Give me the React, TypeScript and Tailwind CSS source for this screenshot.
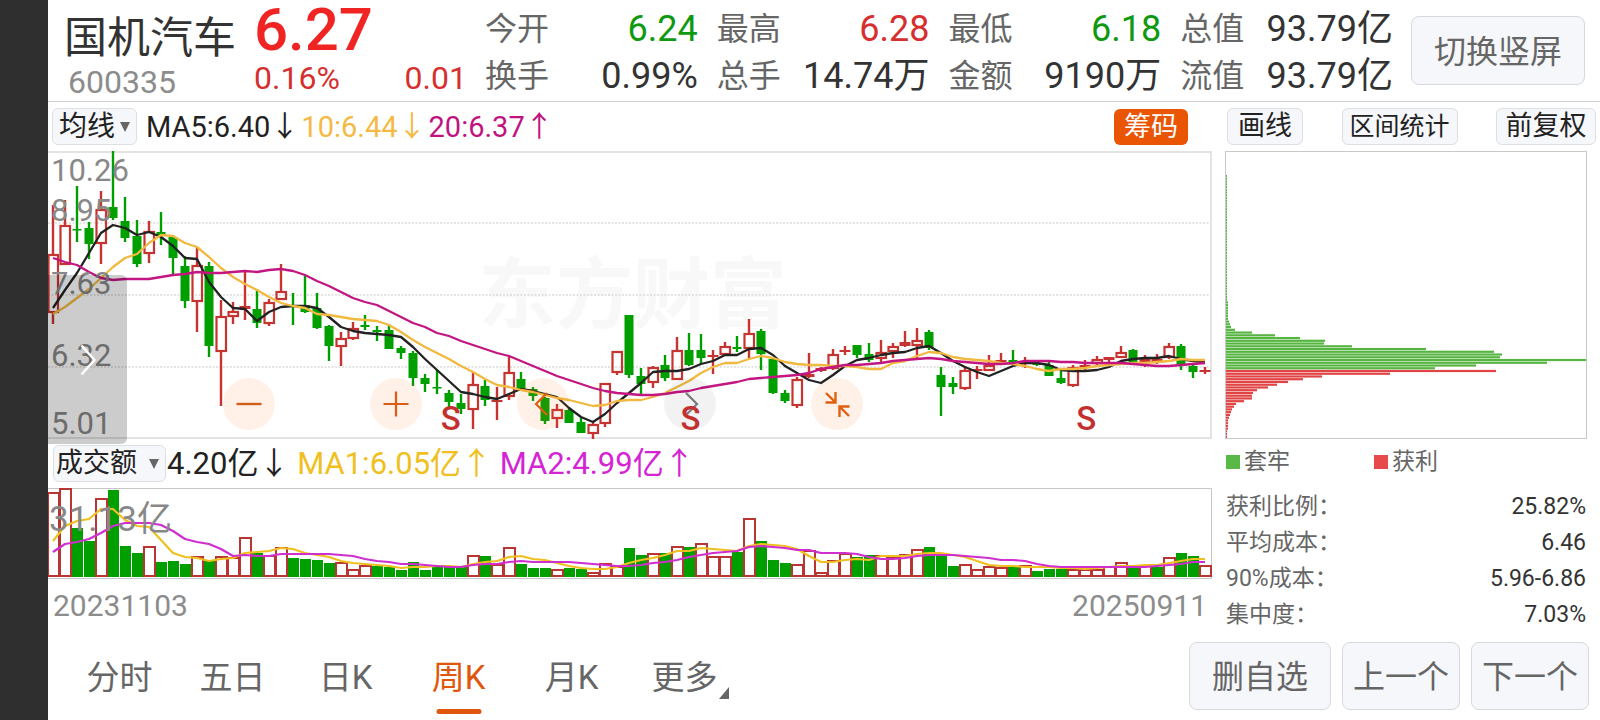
import { useState } from 'react'

type Candle = [up: 0 | 1, high: number, top: number, bottom: number, low: number, volumeTop: number]

const STEP = 12
const UP = '#c63431'
const DOWN = '#009f00'

// y values in chart units, measured from the top of each plot
const candles: Candle[] = [
  [1, 54, 103, 162, 173, 4],
  [1, 49, 74, 114, 114, 0],
  [0, 35, 78, 79, 91, 40],
  [0, 71, 77, 93, 108, 53],
  [1, 40, 58, 93, 113, 10],
  [0, 0, 56, 67, 69, 2],
  [0, 46, 70, 87, 91, 58],
  [0, 69, 85, 113, 116, 65],
  [1, 70, 80, 103, 112, 58],
  [0, 61, 81, 84, 94, 74],
  [0, 84, 86, 107, 123, 73],
  [0, 105, 115, 150, 157, 76],
  [1, 96, 114, 151, 181, 68],
  [0, 111, 115, 195, 206, 73],
  [1, 149, 165, 201, 255, 68],
  [1, 151, 160, 166, 173, 69],
  [1, 121, 155, 158, 169, 49],
  [0, 138, 158, 172, 177, 65],
  [1, 148, 151, 173, 175, 67],
  [1, 113, 140, 149, 149, 59],
  [0, 142, 154, 156, 174, 70],
  [0, 124, 154, 161, 162, 71],
  [0, 142, 157, 177, 178, 72],
  [0, 174, 175, 195, 210, 75],
  [1, 181, 187, 196, 215, 74],
  [1, 171, 177, 188, 189, 81],
  [0, 164, 174, 176, 179, 77],
  [0, 175, 179, 181, 190, 78],
  [0, 173, 179, 198, 198, 79],
  [0, 195, 197, 202, 208, 82],
  [0, 200, 202, 227, 235, 74],
  [0, 223, 227, 233, 241, 82],
  [0, 219, 236, 237, 243, 78],
  [0, 239, 242, 251, 256, 79],
  [0, 243, 252, 258, 263, 78],
  [1, 221, 233, 259, 278, 67],
  [0, 229, 235, 249, 255, 68],
  [1, 236, 249, 251, 269, 76],
  [1, 204, 221, 246, 249, 59],
  [0, 221, 228, 238, 238, 76],
  [0, 236, 238, 245, 250, 80],
  [0, 246, 247, 270, 273, 80],
  [1, 253, 258, 268, 277, 81],
  [0, 257, 259, 272, 272, 80],
  [0, 267, 271, 282, 282, 81],
  [1, 272, 273, 283, 288, 84],
  [1, 232, 232, 273, 276, 75],
  [1, 200, 200, 222, 224, 78],
  [0, 164, 164, 224, 227, 60],
  [0, 217, 225, 233, 243, 67],
  [1, 215, 216, 232, 237, 65],
  [0, 204, 214, 227, 230, 65],
  [1, 186, 199, 229, 229, 58],
  [0, 182, 199, 214, 215, 59],
  [0, 183, 199, 207, 213, 55],
  [1, 199, 204, 206, 223, 68],
  [1, 191, 195, 204, 205, 68],
  [0, 185, 196, 198, 201, 64],
  [1, 168, 182, 198, 207, 30],
  [0, 178, 180, 203, 219, 53],
  [0, 207, 208, 242, 243, 72],
  [0, 239, 242, 250, 252, 75],
  [1, 226, 228, 255, 257, 76],
  [1, 202, 223, 226, 227, 62],
  [1, 216, 217, 220, 221, 84],
  [1, 198, 203, 218, 219, 72],
  [1, 195, 199, 200, 204, 65],
  [0, 194, 194, 204, 207, 69],
  [0, 192, 203, 209, 211, 67],
  [1, 189, 201, 208, 213, 67],
  [1, 192, 195, 201, 207, 69],
  [1, 180, 191, 195, 196, 66],
  [1, 177, 189, 195, 208, 61],
  [0, 179, 181, 197, 199, 59],
  [0, 216, 224, 236, 265, 68],
  [0, 226, 232, 236, 243, 78],
  [1, 216, 219, 238, 239, 76],
  [1, 215, 218, 220, 228, 81],
  [1, 204, 214, 220, 220, 78],
  [1, 202, 209, 211, 214, 79],
  [0, 199, 209, 211, 211, 79],
  [1, 206, 211, 213, 217, 77],
  [0, 210, 212, 214, 215, 83],
  [0, 211, 214, 225, 225, 81],
  [0, 220, 227, 232, 233, 81],
  [1, 214, 216, 235, 236, 81],
  [1, 209, 214, 217, 219, 81],
  [1, 205, 208, 213, 214, 81],
  [1, 206, 206, 209, 212, 78],
  [1, 195, 201, 207, 207, 74],
  [0, 198, 199, 212, 212, 79],
  [1, 204, 208, 212, 216, 77],
  [1, 203, 208, 212, 213, 79],
  [1, 192, 195, 207, 208, 69],
  [0, 193, 195, 214, 219, 65],
  [0, 212, 215, 221, 227, 68],
  [1, 216, 219, 220, 223, 77],
]

// volume bars whose colour differs from the candle above them
const volumeUp: Record<number, 0 | 1> = { 26: 1, 54: 1, 92: 0 }

const ma5 = [
  157, 139, 122, 102, 82, 74, 77, 84, 81, 86, 95, 107, 108, 131, 146, 157, 158, 170, 161, 156, 155, 155, 157, 166,
  176, 180, 182, 183, 184, 186, 196, 208, 219, 230, 241, 243, 246, 248, 243, 238, 240, 243, 246, 257, 266, 271, 263, 252,
  242, 232, 221, 220, 220, 218, 213, 210, 204, 204, 198, 197, 204, 215, 222, 229, 232, 224, 215, 209, 207, 204, 202,
  201, 197, 195, 202, 210, 216, 221, 225, 220, 215, 212, 212, 214, 219, 220, 220, 219, 216, 210, 208, 207, 207, 205, 208, 210, 211,
]
const ma10 = [
  163, 156, 147, 138, 127, 116, 107, 103, 92, 84, 85, 92, 96, 106, 117, 126, 133, 139, 146, 152, 155, 157, 163, 164,
  166, 168, 169, 170, 174, 181, 189, 196, 202, 208, 215, 221, 228, 234, 236, 239, 241, 244, 247, 249, 252, 255, 254, 250,
  249, 249, 246, 242, 236, 230, 222, 216, 212, 212, 208, 205, 207, 211, 213, 214, 214, 215, 215, 216, 218, 218, 212,
  210, 205, 201, 202, 206, 208, 209, 210, 212, 213, 215, 218, 220, 218, 218, 217, 215, 214, 213, 212, 212, 211, 210, 208, 209, 209,
]
const ma20 = [
  107, 111, 114, 121, 127, 129, 128, 128, 128, 126, 124, 123, 121, 122, 122, 121, 120, 121, 119, 118, 120, 124, 130, 135,
  141, 147, 151, 154, 160, 166, 172, 176, 182, 185, 190, 194, 198, 202, 205, 210, 215, 220, 225, 229, 233, 237, 240, 242,
  243, 244, 244, 243, 241, 240, 237, 235, 233, 231, 228, 227, 226, 225, 224, 222, 218, 216, 214, 214, 213, 212, 210,
  209, 208, 207, 208, 210, 211, 212, 213, 213, 212, 210, 210, 210, 211, 211, 212, 212, 212, 212, 213, 214, 215, 215, 214, 213, 212,
]
const volMa1 = [
  53, 38, 33, 31, 21, 21, 32, 38, 39, 52, 65, 69, 70, 73, 71, 70, 65, 64, 63, 60, 61, 65, 67, 69, 73, 75, 76, 77, 78, 80,
  79, 79, 78, 78, 79, 76, 74, 73, 69, 68, 71, 72, 75, 78, 80, 81, 81, 79, 75, 72, 70, 67, 63, 63, 60, 61, 62, 63, 58, 56,
  57, 58, 61, 68, 74, 74, 72, 71, 72, 68, 68, 68, 66, 65, 65, 67, 69, 73, 77, 78, 78, 79, 79, 79, 80, 80, 81, 80, 79, 78,
  78, 77, 77, 75, 73, 71, 71,
]
const volMa2 = [
  64, 56, 54, 51, 45, 38, 35, 35, 35, 37, 43, 51, 54, 56, 61, 68, 67, 68, 68, 66, 66, 66, 66, 66, 67, 68, 71, 73, 74, 76,
  76, 77, 78, 79, 79, 77, 76, 76, 74, 73, 74, 74, 74, 74, 75, 76, 77, 78, 78, 77, 75, 74, 72, 69, 67, 65, 64, 63, 59, 58,
  59, 60, 62, 62, 65, 65, 65, 66, 69, 71, 71, 70, 68, 67, 67, 67, 68, 69, 70, 72, 72, 73, 76, 78, 79, 79, 79, 79, 79, 79,
  79, 79, 78, 77, 76, 74, 74,
]

const trapped = [
  ...Array<number>(46).fill(1),
  ...Array<number>(7).fill(2),
  3, 4, 5, 9, 26, 49, 74, 99, 98, 126, 200, 268, 276, 274, 360, 321, 250, 209,
]
const profit = [270, 164, 96, 77, 62, 51, 42, 31, 27, 26, 26, 18, 10, 8, 6, 5, 4, 3, 2, 2, 2, 2, 1, 1, 1]

const quotes = [
  [
    { label: '今开', value: '6.24', tone: 'text-[#0f990f]' },
    { label: '换手', value: '0.99%', tone: 'text-[#333]' },
  ],
  [
    { label: '最高', value: '6.28', tone: 'text-[#d5302f]' },
    { label: '总手', value: '14.74万', tone: 'text-[#333]' },
  ],
  [
    { label: '最低', value: '6.18', tone: 'text-[#0f990f]' },
    { label: '金额', value: '9190万', tone: 'text-[#333]' },
  ],
  [
    { label: '总值', value: '93.79亿', tone: 'text-[#333]' },
    { label: '流值', value: '93.79亿', tone: 'text-[#333]' },
  ],
]

const chipStats = [
  { label: '获利比例：', value: '25.82%' },
  { label: '平均成本：', value: '6.46' },
  { label: '90%成本：', value: '5.96-6.86' },
  { label: '集中度：', value: '7.03%' },
]

const tabs = ['分时', '五日', '日K', '周K', '月K', '更多']

const axisLabels = [
  { text: '10.26', pos: 'top-1' },
  { text: '8.95', pos: 'top-11' },
  { text: '7.63', pos: 'top-[117px]' },
  { text: '6.32', pos: 'top-[189px]' },
  { text: '5.01', pos: 'top-[257px]' },
]

const sellMarks = ['left-[34.6%]', 'left-[55.2%]', 'left-[89.2%]']

function toPoints(values: number[]) {
  return values.map((y, i) => `${5 + i * STEP},${y}`).join(' ')
}

function Caret() {
  return (
    <svg viewBox="0 0 10 10" className="pointer-events-none absolute right-[7px] h-[10px] w-[10px]" aria-hidden="true">
      <path d="M0 0H10L5 10Z" fill="#666" />
    </svg>
  )
}

function PriceChart() {
  return (
    <svg viewBox="0 0 1164 288" preserveAspectRatio="none" className="absolute inset-0 h-full w-full" aria-hidden="true">
      {[72, 144, 216].map((y) => (
        <line key={y} x1="0" x2="1164" y1={y} y2={y} stroke="#dcdcdc" strokeWidth="1.5" strokeDasharray="2 1.5" />
      ))}
      <path d="M0 1H1163V287H0" fill="none" stroke="#e3e3e3" strokeWidth="2" />
      {candles.map(([up, high, top, bottom, low], i) => {
        const x = 5 + i * STEP
        if (!up) {
          return (
            <g key={i} fill={DOWN}>
              <rect x={x - 1.2} y={high} width="2.4" height={low - high} />
              <rect x={x - 4.5} y={top} width="9" height={Math.max(bottom - top, 1.5)} />
            </g>
          )
        }
        return (
          <g key={i} fill={UP}>
            <rect x={x - 1.2} y={high} width="2.4" height={Math.max(top - high, 0)} />
            <rect x={x - 1.2} y={bottom} width="2.4" height={Math.max(low - bottom, 0)} />
            {bottom - top > 4 ? (
              <rect x={x - 4.5} y={top + 1} width="9.5" height={bottom - top - 2} fill="none" stroke={UP} strokeWidth="2.2" />
            ) : (
              <rect x={x - 5.5} y={top} width="11" height={Math.max(bottom - top, 2)} />
            )}
          </g>
        )
      })}
      <g fill="none" strokeWidth="2.3" strokeLinejoin="round">
        <polyline points={toPoints(ma5)} stroke="#222" />
        <polyline points={toPoints(ma10)} stroke="#f2b941" />
        <polyline points={toPoints(ma20)} stroke="#c31682" />
      </g>
    </svg>
  )
}

function VolumeChart() {
  return (
    <svg viewBox="0 0 1164 91" preserveAspectRatio="none" className="absolute inset-0 h-full w-full" aria-hidden="true">
      <path d="M0 .5H1163.5V90.5H0" fill="none" stroke="#c6c6c6" />
      {candles.map((candle, i) => {
        const x = 5 + i * STEP
        const top = candle[5]
        const up = volumeUp[i] ?? candle[0]
        return up ? (
          <rect key={i} x={x - 5} y={top + 1} width="11" height={87 - top} fill="#fff" stroke="#b93533" strokeWidth="2" />
        ) : (
          <rect key={i} x={x - 5} y={top} width="11" height={89 - top} fill={DOWN} />
        )
      })}
      <g fill="none" strokeWidth="2.2" strokeLinejoin="round">
        <polyline points={toPoints(volMa1)} stroke="#f0c020" />
        <polyline points={toPoints(volMa2)} stroke="#cf2fcf" />
      </g>
    </svg>
  )
}

function ChipChart() {
  const pitch = 2.745
  const start = 23
  return (
    <svg viewBox="0 0 360 286" preserveAspectRatio="none" className="h-full w-full" aria-hidden="true">
      {trapped.map((w, i) => (
        <rect key={i} x="0" y={start + i * pitch} width={w} height="2.2" fill="#55b540" />
      ))}
      {profit.map((w, i) => (
        <rect key={i} x="0" y={start + (trapped.length + i) * pitch} width={w} height="2.2" fill="#e04444" />
      ))}
    </svg>
  )
}

function ChartControls() {
  const warm = 'flex h-13 w-13 items-center justify-center rounded-full bg-[#ff6a1f]/10'
  const icon = 'h-8 w-8'
  return (
    <div className="absolute top-[227px] left-[175px] flex gap-[95px]">
      <button type="button" aria-label="缩小" className={warm}>
        <svg viewBox="0 0 32 32" className={icon} fill="none" stroke="#cf5f1a" strokeWidth="2.4">
          <path d="M3.5 16H28.5" />
        </svg>
      </button>
      <button type="button" aria-label="放大" className={warm}>
        <svg viewBox="0 0 32 32" className={icon} fill="none" stroke="#dd5d14" strokeWidth="2.2">
          <path d="M3.5 16H28.5M16 3.5V28.5" />
        </svg>
      </button>
      <button type="button" aria-label="左移" className={warm}>
        <svg viewBox="0 0 32 32" className={icon} fill="none" stroke="#e0600f" strokeWidth="2.2">
          <path d="M20 5L9 16L20 27" />
        </svg>
      </button>
      <button type="button" aria-label="右移" className="flex h-13 w-13 items-center justify-center rounded-full bg-black/5">
        <svg viewBox="0 0 32 32" className={icon} fill="none" stroke="#7a7a7a" strokeWidth="2.2">
          <path d="M12 5L23 16L12 27" />
        </svg>
      </button>
      <button type="button" aria-label="收起" className={warm}>
        <svg viewBox="0 0 32 32" className={icon} fill="none" stroke="#e0600f" strokeWidth="2.4">
          <path d="M5 5L14 14M4.5 14.5H14.5V4M28 28L19 19M28.5 18.5H18.5V29" />
        </svg>
      </button>
    </div>
  )
}

export default function App() {
  const [active, setActive] = useState('周K')

  return (
    <div className="flex min-h-screen bg-white font-['Roboto','Noto_Sans_CJK_SC',sans-serif] text-[#222]">
      <div className="w-12 shrink-0 bg-[#2f2f2f]" />
      <div className="flex min-w-0 flex-1 flex-col">
        <header className="flex h-[102px] border-b border-[#d2d2d2]">
          <div className="w-[204px] shrink-0 pt-2 pl-4">
            <h1 className="text-[43px] leading-[60px] whitespace-nowrap text-[#333]">国机汽车</h1>
            <p className="pl-1 text-[32px] leading-[28px] text-[#8c8c8c]">600335</p>
          </div>
          <div className="mr-[18px] w-[215px] shrink-0 pl-[2px]">
            <p className="text-[60px] leading-[60px] font-medium text-[#f02523]">6.27</p>
            <p className="flex justify-between text-[32px] leading-[36px] text-[#d5302f]">
              <span>0.16%</span>
              <span>0.01</span>
            </p>
          </div>
          <div className="flex min-w-0 flex-1 gap-[19px] pt-[6px]">
            {quotes.map((group) => (
              <dl key={group[0].label} className="flex-1 whitespace-nowrap">
                {group.map((item) => (
                  <div key={item.label} className="flex items-center justify-between leading-[47px]">
                    <dt className="text-[32px] text-[#666]">{item.label}</dt>
                    <dd className={`text-[36px] ${item.tone}`}>{item.value}</dd>
                  </div>
                ))}
              </dl>
            ))}
          </div>
          <button
            type="button"
            className="mt-4 mr-[15px] ml-[18px] h-[69px] w-[174px] shrink-0 rounded-lg border border-[#d6d9de] bg-[#f6f7fa] pt-[2px] text-[32px] text-[#666]"
          >
            切换竖屏
          </button>
        </header>

        <main className="flex">
          <section className="min-w-0 flex-1">
            <div className="flex h-[49px] items-center pr-6 pl-1">
              <div className="relative flex items-center">
                <select
                  aria-label="均线"
                  className="h-[37px] w-[85px] appearance-none rounded-md border border-[#dcdfe4] bg-[#f6f7fa] pl-[6px] text-[28px] leading-[35px]"
                >
                  <option>均线</option>
                </select>
                <Caret />
              </div>
              <p className="ml-[9px] flex gap-[2px] pt-[2px] text-[29px] leading-[37px] whitespace-nowrap">
                <span>MA5:6.40↓</span>
                <span className="text-[#f5b944]">10:6.44↓</span>
                <span className="text-[#bf1480]">20:6.37↑</span>
              </p>
              <button type="button" className="ml-auto h-9 w-[74px] rounded-md bg-[#ea5504] text-[27px] leading-[36px] text-white">
                筹码
              </button>
            </div>

            <div className="relative h-[288px]">
              <div className="absolute top-[101px] left-[37%] text-[77px] leading-[88px] font-bold whitespace-nowrap text-[#f8f8f8]">
                东方财富
              </div>
              <PriceChart />
              {axisLabels.map((label) => (
                <span key={label.text} className={`absolute left-[3px] text-[31px] leading-[32px] text-[#888] ${label.pos}`}>
                  {label.text}
                </span>
              ))}
              <ChartControls />
              {sellMarks.map((pos) => (
                <span
                  key={pos}
                  className={`absolute top-[251px] w-5 -translate-x-1/2 text-center text-[33px] leading-[33px] font-medium text-[#c2312f] ${pos}`}
                >
                  S
                </span>
              ))}
              <button
                type="button"
                aria-label="展开"
                className="absolute top-[124px] left-0 flex h-[169px] w-[79px] items-center justify-center rounded-r-md bg-black/20"
              >
                <svg viewBox="0 0 16 32" className="h-8 w-4" fill="none" stroke="#fff" strokeWidth="2.4">
                  <path d="M1.5 1.5L14.5 16L1.5 30.5" />
                </svg>
              </button>
            </div>

            <div className="flex h-[49px] items-center pl-[5px]">
              <div className="relative flex items-center">
                <select
                  aria-label="成交额"
                  className="h-[37px] w-[113px] appearance-none rounded-md border border-[#dcdfe4] bg-[#f6f7fa] pl-[2px] text-[27px] leading-[35px]"
                >
                  <option>成交额</option>
                </select>
                <Caret />
              </div>
              <p className="ml-[1px] text-[31px] leading-[40px] whitespace-nowrap">
                4.20亿↓ <span className="text-[#f0c020]">MA1:6.05亿↑ </span>
                <span className="text-[#d424d4]">MA2:4.99亿↑</span>
              </p>
            </div>

            <div className="relative h-[91px]">
              <VolumeChart />
              <span className="absolute top-[14px] left-[1px] text-[35px] leading-[35px] text-[#888]">31.13亿</span>
            </div>

            <div className="flex h-[53px] justify-between pt-[6px] pr-[5px] pl-[5px] text-[30px] leading-[42px] text-[#8c8c8c]">
              <span>20231103</span>
              <span>20250911</span>
            </div>
          </section>

          <aside className="w-[388px] shrink-0 pl-[13px]">
            <div className="flex h-[49px] items-center justify-between pr-1 pl-[2px] text-[#222]">
              <button type="button" className="h-[37px] w-[76px] rounded-md border border-[#dcdfe4] bg-[#f6f7fa] text-[27px] leading-[35px]">
                画线
              </button>
              <button type="button" className="h-[37px] w-[116px] rounded-md border border-[#dcdfe4] bg-[#f6f7fa] text-[25px] leading-[35px]">
                区间统计
              </button>
              <button type="button" className="h-[37px] w-[100px] rounded-md border border-[#dcdfe4] bg-[#f6f7fa] text-[27px] leading-[35px]">
                前复权
              </button>
            </div>
            <div className="mr-[13px] h-[288px] border border-[#c8c8c8]">
              <ChipChart />
            </div>
            <div className="flex h-[50px] items-center pb-1 pl-[1px] text-[23px] text-[#666]">
              <span className="flex w-[148px] items-center gap-1">
                <i className="h-[14px] w-[14px] bg-[#58b947]" />
                套牢
              </span>
              <span className="flex items-center gap-1">
                <i className="h-[14px] w-[14px] bg-[#e64a4a]" />
                获利
              </span>
            </div>
            <dl className="mr-[14px] pl-[1px] text-[23px] leading-[36px]">
              {chipStats.map((row) => (
                <div key={row.label} className="flex justify-between">
                  <dt className="text-[#666]">{row.label}</dt>
                  <dd className="text-[#333]">{row.value}</dd>
                </div>
              ))}
            </dl>
          </aside>
        </main>

        <footer className="flex flex-1 items-start pt-[9px] pr-[11px] pl-[15px]">
          <nav className="flex" role="tablist">
            {tabs.map((tab) => (
              <button
                key={tab}
                type="button"
                role="tab"
                aria-selected={tab === active}
                onClick={() => setActive(tab)}
                className={`relative h-[72px] w-[113px] text-[33px] leading-[72px] whitespace-nowrap ${
                  tab === active ? 'text-[#e0560c]' : 'text-[#666]'
                }`}
              >
                {tab}
                {tab === active && (
                  <span className="absolute bottom-0 left-1/2 h-[5px] w-[45px] -translate-x-1/2 rounded-full bg-[#e0560c]" />
                )}
                {tab === '更多' && (
                  <svg viewBox="0 0 10 12" className="absolute right-3 bottom-[15px] h-3 w-[10px]" aria-hidden="true">
                    <path d="M10 0V12H0Z" fill="#666" />
                  </svg>
                )}
              </button>
            ))}
          </nav>
          <div className="ml-auto flex gap-[11px] text-[32px] text-[#666]">
            <button type="button" className="h-[68px] w-[142px] rounded-lg border border-[#d6d9de] bg-[#f6f7fa] pt-[2px]">
              删自选
            </button>
            <button type="button" className="h-[68px] w-[118px] rounded-lg border border-[#d6d9de] bg-[#f6f7fa] pt-[2px]">
              上一个
            </button>
            <button type="button" className="h-[68px] w-[118px] rounded-lg border border-[#d6d9de] bg-[#f6f7fa] pt-[2px]">
              下一个
            </button>
          </div>
        </footer>
      </div>
    </div>
  )
}
